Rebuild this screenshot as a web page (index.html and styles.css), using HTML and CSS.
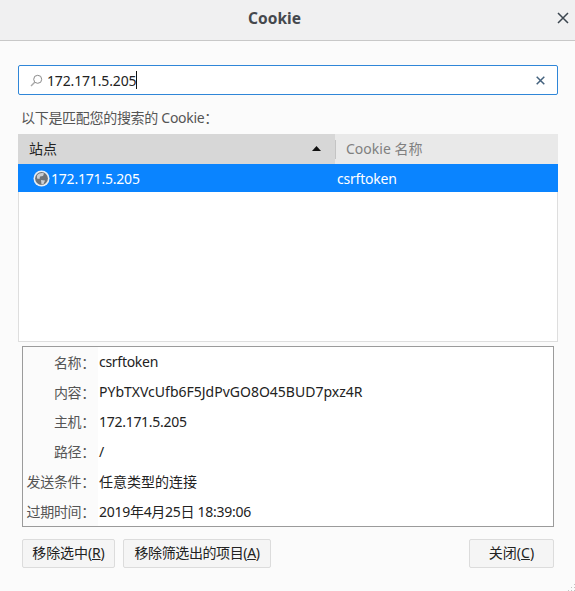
FILE: index.html
```html
<!DOCTYPE html>
<html>
  <head>
    <meta charset="utf-8">
    <title>Cookie</title>
    <link rel="stylesheet" href="styles.css">
  </head>
  <body>
    <div class="titlebar">
      <span class="title">Cookie</span>
      <svg class="close-x" width="12" height="12" viewBox="0 0 12 12"><path d="M1 1l10 10M11 1L1 11" stroke="#3c4650" stroke-width="1.5" fill="none"/></svg>
    </div>
    <div class="content">
      <div class="search">
        <svg class="search-icon" width="13" height="13" viewBox="0 0 13 13"><circle cx="7.7" cy="5.3" r="4" stroke="#8a8a8a" stroke-width="1" fill="none"/><path d="M5 8L1 12" stroke="#a8a8a8" stroke-width="1.4" fill="none"/></svg>
        <span class="search-text">172.171.5.205</span><span class="caret"></span>
        <svg class="search-clear" width="9" height="9" viewBox="0 0 9 9"><path d="M.7.7l7.6 7.6M8.3.7L.7 8.3" stroke="#44627e" stroke-width="1.5" fill="none"/></svg>
      </div>
      <div class="match-label">以下是匹配您的搜索的 Cookie：</div>
      <div class="tree">
        <div class="tree-head">
          <div class="col col-site">
            <span>站点</span>
            <svg class="sort" width="9" height="5" viewBox="0 0 9 5"><path d="M4.5 0L9 5H0z" fill="#111"/></svg>
          </div>
          <div class="col col-name"><span class="col-sep"></span><span>Cookie 名称</span></div>
        </div>
        <div class="tree-row">
          <div class="cell-site">
            <svg class="globe" width="17" height="17" viewBox="0 0 17 17">
              <circle cx="8.5" cy="8.5" r="8" fill="#e8eef4"/>
              <circle cx="8.5" cy="8.5" r="6.4" fill="#6f7479"/>
              <path d="M4 5.5c2-2.5 5-3 7-2l-1 2.5-3 .5-.5 2.5-2.5-.5zM8 10l4 .5-1.5 3.5-2 .5z" fill="#c9ced3"/>
            </svg>
            <span class="tight">172.171.5.205</span>
          </div>
          <div class="tight">csrftoken</div>
        </div>
      </div>
      <div class="details">
        <div class="detail"><span class="detail-label">名称：</span><span class="detail-value tighter">csrftoken</span></div>
        <div class="detail"><span class="detail-label">内容：</span><span class="detail-value">PYbTXVcUfb6F5JdPvGO8O45BUD7pxz4R</span></div>
        <div class="detail"><span class="detail-label">主机：</span><span class="detail-value tighter">172.171.5.205</span></div>
        <div class="detail"><span class="detail-label">路径：</span><span class="detail-value">/</span></div>
        <div class="detail"><span class="detail-label">发送条件：</span><span class="detail-value">任意类型的连接</span></div>
        <div class="detail"><span class="detail-label">过期时间：</span><span class="detail-value tighter">2019年4月25日 18:39:06</span></div>
      </div>
      <div class="buttons">
        <button class="btn btn-selected">移除选中(<u>R</u>)</button>
        <button class="btn btn-filtered">移除筛选出的项目(<u>A</u>)</button>
        <div class="spacer"></div>
        <button class="btn btn-close">关闭(<u>C</u>)</button>
      </div>
    </div>
    <div class="grip"></div>
  </body>
</html>
```

FILE: styles.css
```css
* {
  box-sizing: border-box;
}

html, body {
  margin: 0;
  padding: 0;
  height: 100%;
}

body {
  background: #fbfbfb;
  color: #222;
  font-family: "Noto Sans", "Noto Sans CJK SC", sans-serif;
  font-size: 14px;
  overflow: hidden;
}

.tight {
  letter-spacing: -0.2px;
}

.tighter {
  letter-spacing: -0.28px;
}

/*----- TITLE -----*/

.titlebar {
  height: 41px;
  background: #f0f0f1;
  border-bottom: 1px solid #c8c8c8;
  display: flex;
  align-items: center;
  justify-content: center;
  position: relative;
  padding-bottom: 4px;
  padding-right: 26px;
}

.title {
  font-size: 15.5px;
  font-weight: 700;
  color: #45484d;
}

.close-x {
  position: absolute;
  right: 6px;
  top: 12px;
}

/*----- SEARCH -----*/

.content {
  padding: 24px 17px 0 18px;
}

.search {
  height: 30px;
  background: #fff;
  border: 1px solid #2f86d8;
  border-radius: 2px;
  display: flex;
  align-items: center;
  padding-left: 11px;
  padding-right: 12px;
  color: #222;
}

.search-icon {
  flex: 0 0 auto;
  margin-right: 4px;
}

.search-text {
  letter-spacing: -0.15px;
}

.caret {
  width: 1px;
  height: 18px;
  background: #111;
}

.search-clear {
  margin-left: auto;
}

.match-label {
  margin: 13px 0 0 3px;
  height: 26px;
  line-height: 19px;
  color: #555;
  letter-spacing: -0.3px;
}

/*----- LIST -----*/

.tree {
  height: 208px;
  background: #fff;
  border: 1px solid #dedede;
  border-top: none;
}

.tree-head {
  height: 30px;
  display: flex;
  margin: 0 -1px;
}

.col {
  display: flex;
  align-items: center;
  padding-bottom: 2px;
}

.col-site {
  width: 317px;
  background: #d7d7d7;
  padding-left: 11px;
  padding-right: 11px;
  justify-content: space-between;
  color: #222;
}

.sort {
  margin-right: 3px;
}

.col-name {
  flex: 1;
  background: #e9e9e9;
  color: #808080;
  gap: 10px;
  padding-bottom: 0;
  padding-right: 0;
}

.col-name span:last-child {
  margin-top: -2px;
}

.col-sep {
  width: 1px;
  height: 19px;
  background: #c4c4c4;
}

.tree-row {
  height: 28px;
  margin: 0 -1px;
  background: #0a84ff;
  color: #fff;
  display: flex;
  align-items: center;
}

.cell-site {
  width: 319px;
  padding-left: 15px;
  display: flex;
  align-items: center;
  gap: 1px;
}

/*----- DETAILS -----*/

.details {
  margin: 4px 4px 0 4px;
  height: 181px;
  background: #fff;
  border: 1px solid #9b9b9b;
}

.detail {
  height: 29.8px;
  display: flex;
  align-items: center;
}

.detail-label {
  width: 75px;
  flex: 0 0 auto;
  align-self: stretch;
  display: flex;
  align-items: center;
  justify-content: flex-end;
  padding-right: 3px;
  background: #fbfbfb;
  color: #555;
  letter-spacing: -0.3px;
  white-space: nowrap;
}

.detail-value {
  padding-left: 1px;
}

/*----- BUTTONS -----*/

.buttons {
  display: flex;
  gap: 8px;
  margin: 12px 4px 0 4px;
}

.spacer {
  flex: 1;
}

.btn {
  height: 29px;
  padding: 0 0 3px;
  background: #f5f5f5;
  border: 1px solid #dcdcdc;
  border-radius: 2px;
  color: #222;
  font-family: inherit;
  font-size: 14px;
}

.btn-selected {
  width: 93px;
  letter-spacing: -0.1px;
}

.btn-filtered {
  width: 148px;
  letter-spacing: -0.4px;
}

.btn-close {
  width: 85px;
}

.grip {
  position: absolute;
  right: 0;
  bottom: 0;
  width: 8px;
  height: 8px;
  background: radial-gradient(circle, #c4c4c4 0 1px, transparent 1px) 0 0 / 3px 3px;
  clip-path: polygon(100% 0, 100% 100%, 0 100%);
}
```
